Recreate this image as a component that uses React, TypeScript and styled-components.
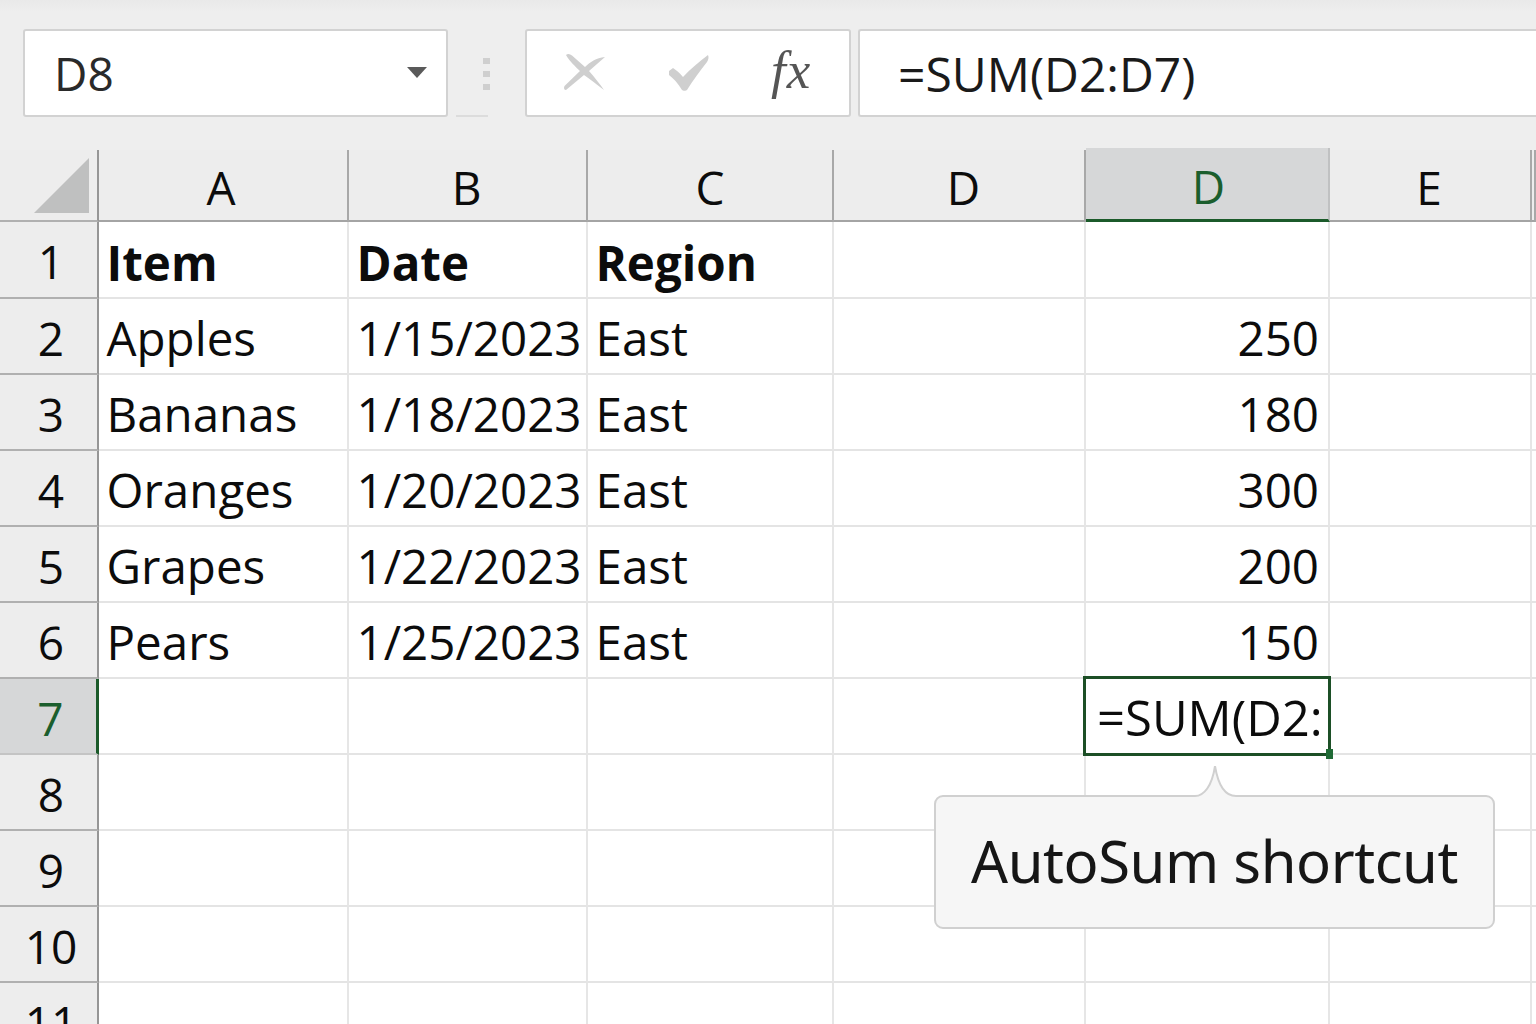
import React from "react";
import styled, { createGlobalStyle } from "styled-components";

const Global = createGlobalStyle`
  html, body { margin: 0; height: 100%; overflow: hidden; background: #ededed; }
  #root { height: 100%; }
  * { box-sizing: border-box; }
`;

const FONT = `"Open Sans", "Noto Sans", "Liberation Sans", sans-serif`;

const Page = styled.div`
  width: 1536px;
  height: 1024px;
  overflow: hidden;
  display: flex;
  flex-direction: column;
  background: #ededed;
  font-family: ${FONT};
  color: #0c0c0c;
`;

const Toolbar = styled.div`
  height: 150px;
  flex: none;
  padding: 29px 0 33px 23px;
  display: flex;
  align-items: stretch;
  background: linear-gradient(#e9e9e9 0, #eeeeee 12px, #eeeeee 100%);
`;

const Box = styled.div`
  background: #fff;
  border: 2px solid #d2d2d2;
  border-radius: 3px;
  display: flex;
  align-items: center;
`;

const NameBox = styled(Box)`
  width: 425px;
  padding: 0 19px 0 29px;
  justify-content: space-between;
  font-size: 46px;
  color: #2a2a2a;
`;

const Caret = styled.span`
  width: 0;
  height: 0;
  border-left: 10px solid transparent;
  border-right: 10px solid transparent;
  border-top: 11px solid #5a5a5a;
  margin-top: -2px;
`;

const Grip = styled.div`
  width: 77px;
  display: flex;
  flex-direction: column;
  align-items: center;
  position: relative;
  padding-top: 29px;
  gap: 7px;
  &::after {
    content: "";
    position: absolute;
    left: 8px;
    bottom: 0;
    width: 32px;
    height: 2px;
    background: #dcdcdc;
  }
`;

const GripDot = styled.span`
  width: 7px;
  height: 6px;
  background: #cfcfcf;
`;

const ActionBox = styled(Box)`
  width: 326px;
  padding-left: 36px;
  margin-right: 7px;
  flex: none;
`;

const ActionSlot = styled.span`
  flex: none;
  width: 104px;
  display: flex;
  align-items: center;
  &:last-child {
    width: auto;
  }
`;

const Fx = styled.span`
  font-family: "Liberation Serif", serif;
  font-style: italic;
  font-size: 53px;
  line-height: 1;
  letter-spacing: 1px;
  color: #555;
  margin: -5px 0 0 0;
`;

const FormulaBox = styled(Box)`
  flex: 1;
  border-right: none;
  padding-left: 38px;
  font-size: 48px;
  color: #1a1a1a;
  border-radius: 3px 0 0 3px;
`;

const Sheet = styled.div`
  flex: 1;
  display: grid;
  grid-template-columns: 99px 250px 239px 246px 252px 244px 202px 4px;
  grid-template-rows: 72px 77px repeat(10, 76px);
  position: relative;
  font-size: 47.5px;
`;

const ColHead = styled.div<{ $active?: boolean; $shift?: number }>`
  display: flex;
  align-items: center;
  justify-content: center;
  padding-left: ${(p) => Math.max(p.$shift ?? 0, 0)}px;
  padding-right: ${(p) => Math.max(-(p.$shift ?? 0), 0)}px;
  padding-top: 4px;
  margin-top: ${(p) => (p.$active ? "-2px" : "0")};
  font-size: 46px;
  background: ${(p) => (p.$active ? "#d6d7d8" : "transparent")};
  color: ${(p) => (p.$active ? "#1b5e2d" : "#0c0c0c")};
  border-right: 2px solid ${(p) => (p.$active ? "#c0c1c2" : "#a8a8a8")};
  border-bottom: ${(p) => (p.$active ? "3px solid #1b5a2a" : "2px solid #a4a4a4")};
`;

const Corner = styled.div`
  display: flex;
  align-items: flex-end;
  border-bottom: 2px solid #b0b0b0;
  border-right: 2px solid #969696;
  padding: 0 0 7px 34px;
`;

const RowHead = styled.div<{ $active?: boolean }>`
  display: flex;
  align-items: center;
  justify-content: center;
  padding-left: 5px;
  padding-top: 3px;
  font-size: 46px;
  background: ${(p) => (p.$active ? "#d6d7d8" : "#ededed")};
  color: ${(p) => (p.$active ? "#1b5e2d" : "#0c0c0c")};
  border-right: ${(p) => (p.$active ? "3px solid #1b5a2a" : "2px solid #969696")};
  border-bottom: 2px solid ${(p) => (p.$active ? "#c4c4c4" : "#b0b0b0")};
`;

const Cell = styled.div<{ $align?: "right"; $bold?: boolean }>`
  background: #fff;
  position: relative;
  display: flex;
  align-items: center;
  justify-content: ${(p) => (p.$align === "right" ? "flex-end" : "flex-start")};
  padding: ${(p) => (p.$bold ? "6px" : "2px")} 9px 0 7.5px;
  border-right: 2px solid #e6e6e6;
  border-bottom: 2px solid #e4e4e4;
  font-weight: ${(p) => (p.$bold ? 700 : 400)};
  white-space: nowrap;
  color: #0c0c0c;
`;

const ActiveCell = styled.div`
  position: absolute;
  left: -3px;
  top: -3px;
  width: 248px;
  height: 80px;
  border: 3px solid #1c4f26;
  background: #fff;
  display: flex;
  align-items: center;
  padding: 2px 0 0 11px;
  font-size: 49px;
  z-index: 2;
  &::after {
    content: "";
    position: absolute;
    right: -5px;
    bottom: -6px;
    width: 7px;
    height: 10px;
    background: #1f6a35;
  }
`;

const Callout = styled.div`
  position: absolute;
  left: 934px;
  top: 645px;
  width: 561px;
  height: 134px;
  padding-bottom: 4px;
  background: #f6f6f6;
  border: 2px solid #d0d0d0;
  border-radius: 9px;
  display: flex;
  align-items: center;
  justify-content: center;
  font-family: "Noto Sans", "Open Sans", sans-serif;
  font-size: 58px;
  letter-spacing: -0.45px;
  color: #161616;
  z-index: 3;
`;

const CalloutArrow = styled.svg`
  position: absolute;
  left: 256px;
  top: -31px;
`;

const CrossIcon = () => (
  <svg width="44" height="40" viewBox="0 0 44 40" aria-hidden="true">
    <path d="M3 2 C5 0 7 1 9 2.5 L22 14 C27 9 33 5 42 4 L26 18 C32 25 37 31 41 37 C33 31 27 26 21 22 C15 27 9 32 3 37 C1 37 0.5 35 1.5 33 L17 18 C12 13 7 9 3 2 Z" fill="#cfcfcf" />
  </svg>
);

const CheckIcon = () => (
  <svg width="44" height="40" viewBox="0 0 44 40" aria-hidden="true">
    <path d="M2 18 L6 15 C9 17 13 20 16 24 C23 16 32 9 41 2 C42 4 41.500 7 40 9 C33 18 26 27 20 37 C19 38 16 38 15 37 C11 30 6 25 2 22 Z" fill="#cfcfcf" />
  </svg>
);

const Triangle = () => (
  <svg width="56" height="56" viewBox="0 0 56 56" aria-hidden="true">
    <path d="M0 56 L55 1 L55 56 Z" fill="#bfc0c0" />
  </svg>
);

const columns: { label: string; shift?: number; active?: boolean }[] = [
  { label: "A", shift: -4 },
  { label: "B", shift: -2 },
  { label: "C" },
  { label: "D", shift: 9 },
  { label: "D", active: true, shift: 3 },
  { label: "E", shift: -2 },
];

type Row = { a?: string; b?: string; c?: string; d?: string; bold?: boolean };

const rows: Row[] = [
  { a: "Item", b: "Date", c: "Region", bold: true },
  { a: "Apples", b: "1/15/2023", c: "East", d: "250" },
  { a: "Bananas", b: "1/18/2023", c: "East", d: "180" },
  { a: "Oranges", b: "1/20/2023", c: "East", d: "300" },
  { a: "Grapes", b: "1/22/2023", c: "East", d: "200" },
  { a: "Pears", b: "1/25/2023", c: "East", d: "150" },
  {},
  {},
  {},
  {},
  {},
];

export default function App() {
  return (
    <Page>
      <Global />
      <Toolbar>
        <NameBox>
          D8
          <Caret />
        </NameBox>
        <Grip>
          <GripDot />
          <GripDot />
          <GripDot />
        </Grip>
        <ActionBox>
          <ActionSlot>
            <CrossIcon />
          </ActionSlot>
          <ActionSlot>
            <CheckIcon />
          </ActionSlot>
          <ActionSlot>
            <Fx>fx</Fx>
          </ActionSlot>
        </ActionBox>
        <FormulaBox>=SUM(D2:D7)</FormulaBox>
      </Toolbar>
      <Sheet>
        <Corner>
          <Triangle />
        </Corner>
        {columns.map((c, i) => (
          <ColHead key={i} $active={c.active} $shift={c.shift}>
            {c.label}
          </ColHead>
        ))}
        <ColHead />
        {rows.map((r, i) => {
          const n = i + 1;
          return (
            <React.Fragment key={n}>
              <RowHead $active={n === 7}>{n}</RowHead>
              <Cell $bold={r.bold}>{r.a}</Cell>
              <Cell $bold={r.bold}>{r.b}</Cell>
              <Cell $bold={r.bold}>{r.c}</Cell>
              <Cell />
              <Cell $align="right">
                {r.d}
                {n === 7 && <ActiveCell>=SUM(D2:</ActiveCell>}
              </Cell>
              <Cell />
              <Cell />
            </React.Fragment>
          );
        })}
        <Callout>
          <CalloutArrow width="50" height="34" viewBox="0 0 50 34" aria-hidden="true">
            <path d="M3 33 L3 30 C12 30 20 20 23 0 C26 18 32 30 44 30 L44 33 Z" fill="#f6f6f6" />
            <path d="M3 30 C12 30 20 20 23 0 C26 18 32 30 44 30" fill="none" stroke="#d0d0d0" strokeWidth="2" />
          </CalloutArrow>
          AutoSum shortcut
        </Callout>
      </Sheet>
    </Page>
  );
}
